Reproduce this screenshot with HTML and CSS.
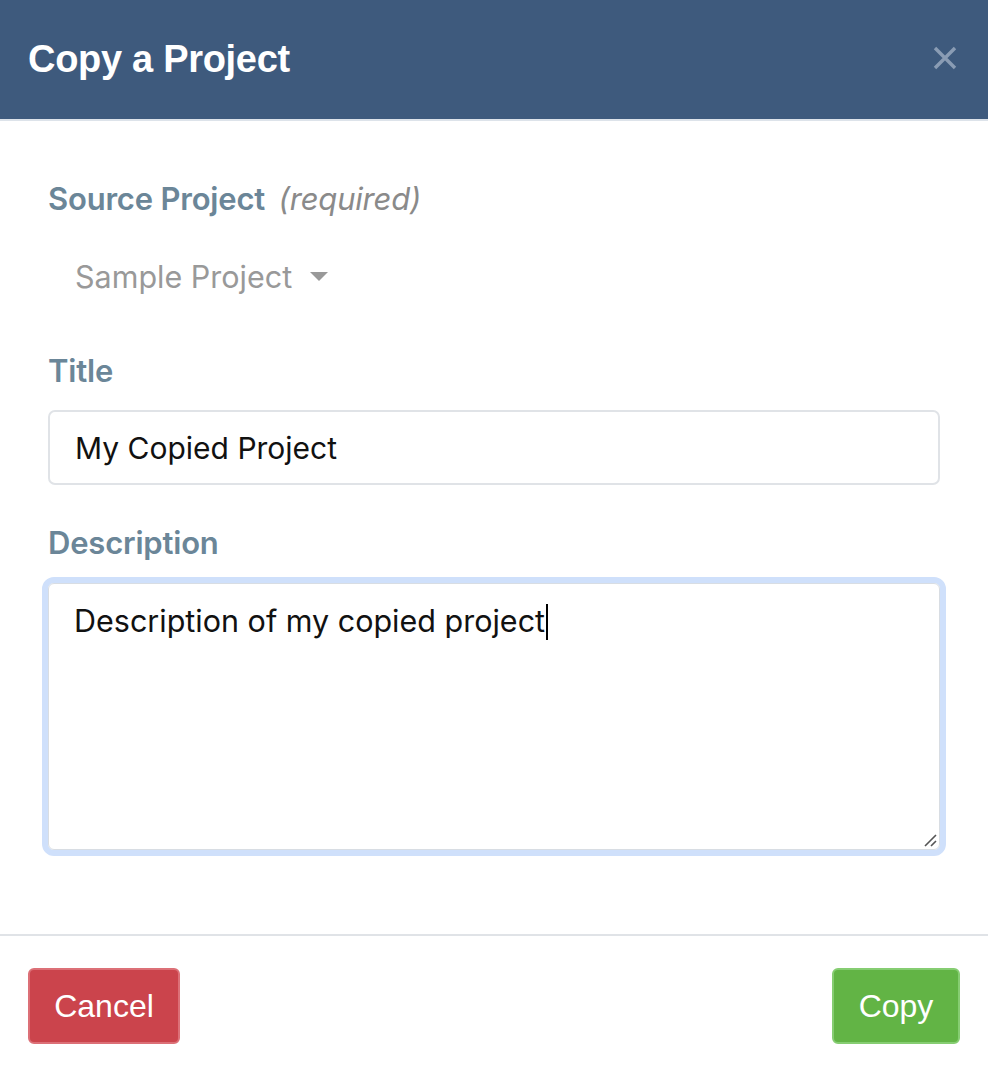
FILE: index.html
```html
<!DOCTYPE html>
<html>
<head>
<meta charset="utf-8">
<link rel="stylesheet" href="styles.css">
</head>
<body>
<div class="modal">
  <header class="modal-header">
    <h1 class="modal-title">Copy a Project</h1>
    <span class="close">
      <svg width="24" height="24" viewBox="0 0 24 24"><path d="M2 2 L22 22 M22 2 L2 22" stroke="#8a9cb4" stroke-width="3.4" stroke-linecap="butt"/></svg>
    </span>
  </header>
  <main class="modal-body">
    <div class="field">
      <label class="label">Source Project <em class="req">(required)</em></label>
      <div class="select">Sample Project <span class="caret"></span></div>
    </div>
    <div class="field">
      <label class="label">Title</label>
      <div class="input">My Copied Project</div>
    </div>
    <div class="field">
      <label class="label">Description</label>
      <div class="textarea-ring">
        <div class="textarea"><span>Description of my copied project</span><span class="cursor"></span>
          <svg class="grip" width="14" height="14" viewBox="0 0 14 14"><path d="M2 13 L13 2 M8 13 L13 8" stroke="#555" stroke-width="1.6"/></svg>
        </div>
      </div>
    </div>
  </main>
  <footer class="modal-footer">
    <button class="btn btn-cancel">Cancel</button>
    <button class="btn btn-copy">Copy</button>
  </footer>
</div>
</body>
</html>
```

FILE: styles.css
```css
html, body {
  margin: 0;
  padding: 0;
  background: #fff;
}
body {
  font-family: Inter, "Liberation Sans", sans-serif;
  width: 988px;
  height: 1076px;
  overflow: hidden;
}
.modal {
  display: flex;
  flex-direction: column;
}
.modal-header {
  height: 119px;
  background: #3e5a7d;
  border-bottom: 2px solid #dde3ea;
  display: flex;
  align-items: center;
  justify-content: space-between;
  padding: 0 31px 0 28px;
}
.modal-title {
  margin: 0;
  color: #fff;
  font-family: "Liberation Sans", Arial, sans-serif;
  font-weight: 700;
  font-size: 38px;
  letter-spacing: -0.3px;
}
.close {
  display: flex;
  margin-top: -4px;
}
.modal-body {
  padding: 58px 42px 0 48px;
  height: 813px;
  box-sizing: border-box;
}
.field {
  display: flex;
  flex-direction: column;
}
.label {
  color: #6b8698;
  font-size: 31px;
  font-weight: 600;
  line-height: 40px;
  height: 40px;
  letter-spacing: -0.2px;
}
.req {
  font-weight: 400;
  color: #8a8a8a;
  margin-left: 6px;
}
.select {
  color: #999;
  font-size: 30.5px;
  line-height: 40px;
  height: 40px;
  margin-top: 38px;
  padding-left: 27px;
  display: flex;
  align-items: center;
  align-self: flex-start;
  margin-bottom: 54px;
}
.caret {
  display: inline-block;
  width: 0;
  height: 0;
  border-left: 9px solid transparent;
  border-right: 9px solid transparent;
  border-top: 9px solid #999;
  margin-left: 18px;
  margin-top: -2px;
}
.input {
  margin-top: 19px;
  height: 75px;
  box-sizing: border-box;
  border: 2px solid #e0e3e7;
  border-radius: 7px;
  font-size: 30px;
  color: #111;
  display: flex;
  align-items: center;
  padding-left: 25px;
  margin-bottom: 38px;
  width: 892px;
}
.textarea-ring {
  margin-top: 14px;
  margin-left: -6px;
  width: 904px;
  height: 279px;
  box-sizing: border-box;
  border: 6px solid #cfe0fb;
  border-radius: 12px;
}
.textarea {
  position: relative;
  height: 100%;
  box-sizing: border-box;
  border: 1px solid #d8dde3;
  border-radius: 6px;
  background: #fff;
  font-size: 30.5px;
  color: #111;
  padding: 17px 0 0 25px;
  line-height: 40px;
  display: flex;
  align-items: flex-start;
}
.cursor {
  display: inline-block;
  width: 2px;
  height: 36px;
  background: #000;
  margin-left: 1px;
  margin-top: 3px;
}
.grip {
  position: absolute;
  right: 2px;
  bottom: 2px;
}
.modal-footer {
  border-top: 2px solid #e0e3e7;
  display: flex;
  justify-content: space-between;
  padding: 32px 28px 0 28px;
}
.btn {
  font-family: "Liberation Sans", Arial, sans-serif;
  font-size: 32px;
  color: #fff;
  height: 76px;
  border-radius: 6px;
  cursor: pointer;
  padding: 0;
}
.btn-cancel {
  width: 152px;
  background: #cb444c;
  border: 2px solid #dc7077;
}
.btn-copy {
  width: 128px;
  background: #62b445;
  border: 2px solid #86cd72;
}
```
